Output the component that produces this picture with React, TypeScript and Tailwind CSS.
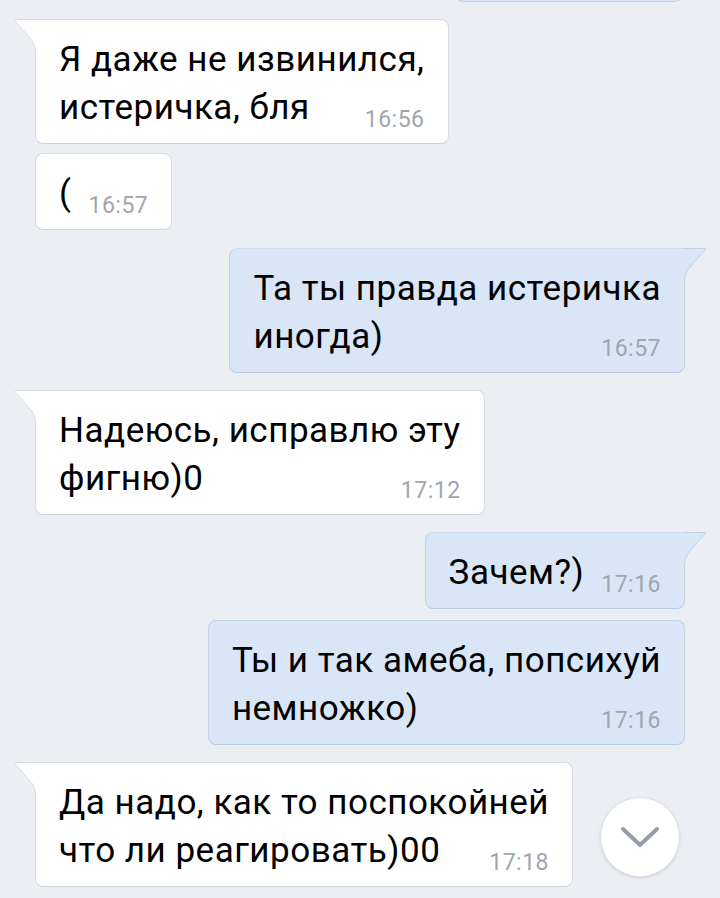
import React from 'react';

type Msg = {
  out: boolean;
  lines: string[];
  time: string;
  tail: boolean;
  gap: string;
};

const messages: Msg[] = [
  { out: false, lines: ['Я даже не извинился,', 'истеричка, бля'], time: '16:56', tail: true, gap: 'mt-[17px]' },
  { out: false, lines: ['('], time: '16:57', tail: false, gap: 'mt-[9px]' },
  { out: true, lines: ['Та ты правда истеричка', 'иногда)'], time: '16:57', tail: true, gap: 'mt-[18px]' },
  { out: false, lines: ['Надеюсь, исправлю эту', 'фигню)0'], time: '17:12', tail: true, gap: 'mt-[17px]' },
  { out: true, lines: ['Зачем?)'], time: '17:16', tail: true, gap: 'mt-[17px]' },
  { out: true, lines: ['Ты и так амеба, попсихуй', 'немножко)'], time: '17:16', tail: false, gap: 'mt-[11px]' },
  { out: false, lines: ['Да надо, как то поспокойней', 'что ли реагировать)00'], time: '17:18', tail: true, gap: 'mt-[17px]' },
];

const Tail = ({ out }: { out: boolean }) => {
  const fill = out ? '#d9e6f7' : '#ffffff';
  const stroke = out ? '#c2d2e5' : '#d6dbe1';
  return (
    <svg
      width="22"
      height="34"
      viewBox="0 0 22 34"
      className={out ? 'absolute top-0 right-[-21px] -scale-x-100' : 'absolute top-0 left-[-21px]'}
    >
      <path d="M1 0.5 H22 V34 H21.5 Q21.5 28 18.5 22 L1 2 Q0.2 0.5 1 0.5 Z" fill={fill} />
      <path d="M22 0.5 H1.2 Q0.2 0.5 0.9 1.6 L18.5 22 Q21.5 27 21.5 34" fill="none" stroke={stroke} strokeWidth="1" />
    </svg>
  );
};

const Bubble = ({ m }: { m: Msg }) => {
  const last = m.lines[m.lines.length - 1];
  const rest = m.lines.slice(0, -1);
  return (
    <div className={`flex ${m.out ? 'justify-end pr-[35px]' : 'justify-start pl-[35px]'} ${m.gap}`}>
      <div className="relative">
        {m.tail && <Tail out={m.out} />}
        <div
          className={`border pl-[23px] pr-[23px] pt-[16px] pb-[11px] text-[35px] leading-[48px] tracking-[0.5px] text-black ${
            m.out ? 'bg-[#d9e6f7] border-[#c2d2e5] border-b-[#b9cae0]' : 'bg-white border-[#d6dbe1] border-b-[#cdd3da]'
          } ${m.tail ? (m.out ? 'rounded-[8px] rounded-tr-none border-t-[#d0dcea]' : 'rounded-[8px] rounded-tl-none') : 'rounded-[8px]'}`}
        >
          {rest.map((l) => (
            <div key={l} className="whitespace-nowrap">
              {l}
            </div>
          ))}
          <div className="flex items-baseline justify-between gap-[17px] whitespace-nowrap">
            <span>{last}</span>
            <span className="translate-y-[8px] text-[23px] leading-[20px] tracking-[0.5px] text-[#a0a6ad]">{m.time}</span>
          </div>
        </div>
      </div>
    </div>
  );
};

export default function App() {
  return (
    <div className="relative h-[898px] w-full overflow-hidden bg-[#ebeef2] font-['Roboto',sans-serif]">
      <div className="flex justify-end pr-[37px]">
        <div className="-mt-[7px] h-[9px] w-[228px] rounded-b-[8px] border border-[#c2d2e5] bg-[#d9e6f7]" />
      </div>
      {messages.map((m, i) => (
        <Bubble key={i} m={m} />
      ))}
      <button className="absolute right-[40px] bottom-[21px] flex h-[80px] w-[80px] items-center justify-center rounded-full border border-[#dde1e6] bg-white shadow-[0_1px_3px_rgba(0,0,0,0.12)]">
        <svg width="40" height="24" viewBox="0 0 40 24">
          <path d="M3 4 L20 20 L37 4" fill="none" stroke="#959ca5" strokeWidth="4" strokeLinecap="round" strokeLinejoin="round" />
        </svg>
      </button>
    </div>
  );
}
